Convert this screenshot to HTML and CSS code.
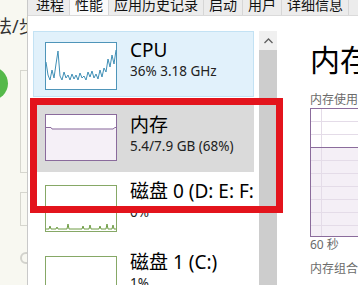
FILE: index.html
```html
<!DOCTYPE html>
<html lang="zh-CN">
<head>
<meta charset="utf-8">
<title>任务管理器</title>
<link rel="stylesheet" href="styles.css">
</head>
<body>
<div class="behind">
  <div class="behind-text">法/步</div>
  <div class="dot"></div>
  <div class="frame frame-a"></div>
  <div class="frame frame-b"></div>
  <div class="ring"></div>
</div>
<div class="tm">
  <div class="tabs">
    <div class="tab">进程</div>
    <div class="tab active">性能</div>
    <div class="tab">应用历史记录</div>
    <div class="tab">启动</div>
    <div class="tab">用户</div>
    <div class="tab">详细信息</div>
  </div>
  <div class="main">
    <div class="side">
      <div class="item sel">
        <svg class="spark" width="72" height="48" viewBox="0 0 72 48">
          <rect x="0.5" y="0.5" width="71" height="47" fill="#fff" stroke="#4f95b9"/>
          <polyline fill="none" stroke="#3f8fb6" stroke-width="1" points="1,20 3,33 5,38 7,28 9,36 11,22 13,9 15,34 17,38 19,30 21,36 23,33 25,38 27,32 29,37 31,33 33,38 35,31 37,36 39,34 41,38 43,30 45,35 47,29 49,36 51,32 53,37 55,28 57,35 59,26 61,30 63,17 65,25 67,13 69,22 71,8"/>
        </svg>
        <div class="txt">
          <div class="name">CPU</div>
          <div class="val">36% 3.18 GHz</div>
        </div>
      </div>
      <div class="item hot">
        <svg class="spark" width="72" height="47" viewBox="0 0 72 47">
          <rect x="0.5" y="0.5" width="71" height="46" fill="#fff"/>
          <rect x="0.5" y="14.5" width="71" height="32" fill="#f5f0f7"/>
          <polyline fill="none" stroke="#8a6b9c" stroke-width="1" points="1,13.5 6,13.5 7,15 68,15 70,13.5 71,13.5"/>
          <rect x="0.5" y="0.5" width="71" height="46" fill="none" stroke="#8a6b9c"/>
        </svg>
        <div class="txt">
          <div class="name">内存</div>
          <div class="val">5.4/7.9 GB (68%)</div>
        </div>
      </div>
      <div class="item disk">
        <svg class="spark" width="72" height="47" viewBox="0 0 72 47">
          <rect x="0.5" y="0.5" width="71" height="46" fill="#fff" stroke="#86a866"/>
          <polyline fill="none" stroke="#6e9c44" stroke-width="1" points="1,44 4,44 5,41 6,44 11,44 12,42 13,44 22,44 23,39 24,44 37,44 38,41 39,44 44,44 45,40 46,44 54,44 55,41 56,44 61,44 62,39 63,44 67,44 68,40 69,44 71,44"/>
        </svg>
        <div class="txt">
          <div class="name">磁盘 0 (D: E: F:</div>
          <div class="val">0%</div>
        </div>
      </div>
      <div class="item disk">
        <svg class="spark" width="72" height="47" viewBox="0 0 72 47">
          <rect x="0.5" y="0.5" width="71" height="46" fill="#fff" stroke="#86a866"/>
        </svg>
        <div class="txt">
          <div class="name">磁盘 1 (C:)</div>
          <div class="val">1%</div>
        </div>
      </div>
    </div>
    <div class="scroll">
      <div class="arrow">
        <svg width="9" height="6" viewBox="0 0 9 6"><polyline points="0.5,5 4.5,1 8.5,5" fill="none" stroke="#606060" stroke-width="1.3"/></svg>
      </div>
      <div class="thumb"></div>
    </div>
    <div class="detail">
      <div class="title">内存</div>
      <div class="label">内存使用</div>
      <svg class="chart" width="100" height="129" viewBox="0 0 100 129">
        <rect x="0" y="39" width="100" height="90" fill="#f4eff6"/>
        <g stroke="#e4dce8" stroke-width="1">
          <line x1="0" y1="13.5" x2="100" y2="13.5"/>
          <line x1="0" y1="26.5" x2="100" y2="26.5"/>
          <line x1="0" y1="52.5" x2="100" y2="52.5"/>
          <line x1="0" y1="65.5" x2="100" y2="65.5"/>
          <line x1="0" y1="78.5" x2="100" y2="78.5"/>
          <line x1="0" y1="91.5" x2="100" y2="91.5"/>
          <line x1="0" y1="104.5" x2="100" y2="104.5"/>
          <line x1="0" y1="117.5" x2="100" y2="117.5"/>
          <line x1="11.5" y1="0" x2="11.5" y2="129"/>
        </g>
        <line x1="0" y1="39.5" x2="100" y2="39.5" stroke="#8b6c9c"/>
        <rect x="0.5" y="0.5" width="99" height="128" fill="none" stroke="#8b6c9c"/>
      </svg>
      <div class="label">60 秒</div>
      <div class="label gap">内存组合</div>
    </div>
  </div>
</div>
<div class="mark"></div>
</body>
</html>
```
FILE: styles.css
```css
* { box-sizing: border-box; }
html, body { margin: 0; padding: 0; }
body {
  width: 358px;
  height: 285px;
  overflow: hidden;
  position: relative;
  display: flex;
  background: #f8f8f1;
  font-family: "Noto Sans", "Noto Sans CJK SC", sans-serif;
  color: #000;
}

/* window behind the task manager */
.behind {
  width: 27px;
  flex: none;
  position: relative;
  overflow: hidden;
}
.behind-text {
  margin: 14px 0 0 -6px;
  font-size: 18px;
  line-height: 24px;
  color: #333;
  white-space: nowrap;
}
.dot {
  position: absolute;
  left: -25px;
  top: 67px;
  width: 33px;
  height: 33px;
  border-radius: 50%;
  background: #55b94a;
}
.frame {
  position: absolute;
  left: 20px;
  width: 20px;
  border: 1px solid #d6d6ce;
}
.frame-a { top: 70px; height: 103px; }
.frame-b { top: 192px; height: 34px; }
.ring {
  position: absolute;
  left: 20px;
  top: 252px;
  width: 12px;
  height: 12px;
  border: 2px solid #d2d2cc;
  border-radius: 50%;
}

/* task manager */
.tm {
  flex: 1;
  min-width: 0;
  background: #fff;
  border-left: 1px solid #c9c9c9;
  display: flex;
  flex-direction: column;
}
.tabs {
  height: 16px;
  flex: none;
  display: flex;
  padding-left: 3px;
  background: #ececec;
  border-bottom: 1px solid #dadada;
  overflow: hidden;
}
.tab {
  margin-top: -2px;
  padding: 0 5px;
  font-size: 14px;
  line-height: 14px;
  border-right: 1px solid #d6d6d6;
  white-space: nowrap;
  color: #111;
}
.tab.active { background: #fafafa; }

.main {
  flex: 1;
  min-height: 0;
  display: flex;
}
.side {
  width: 226px;
  flex: none;
  padding: 15px 0 0 5px;
  display: flex;
  flex-direction: column;
}
.item {
  width: 221px;
  height: 71px;
  flex: none;
  display: flex;
  padding: 13px 0 0 12px;
}
.item.sel {
  height: 66px;
  padding: 10px 0 0 11px;
  margin-bottom: 3px;
  background: #e1f1fb;
  border: 1px solid #c3e2f4;
}
.item.hot {
  height: 72px;
  padding-top: 14px;
  background: #dadada;
}
.spark { flex: none; display: block; }
.txt {
  margin: -3px 0 0 13px;
  min-width: 0;
}
.item.hot .txt { margin-top: 0; }
.item.disk .txt { margin-top: -5px; }
.name {
  font-size: 19px;
  line-height: 22px;
  white-space: nowrap;
}
.val {
  font-size: 13.5px;
  line-height: 20px;
  white-space: nowrap;
  color: #222;
}

.scroll {
  width: 18px;
  flex: none;
  margin: 15px 0 0 5px;
  display: flex;
  flex-direction: column;
  background: #f0f0f0;
}
.arrow {
  height: 19px;
  display: flex;
  align-items: center;
  justify-content: center;
}
.arrow svg { display: block; }
.thumb {
  flex: 1;
  background: #cdcdcd;
}

.detail {
  flex: 1;
  min-width: 0;
  margin-left: 33px;
  padding-top: 24px;
  white-space: nowrap;
}
.title {
  font-size: 30px;
  line-height: 40px;
  margin-bottom: 12px;
}
.label {
  font-size: 12px;
  line-height: 16px;
  color: #6b6b6b;
}
.label.gap { margin-top: 8px; }
.chart { display: block; }

/* annotation */
.mark {
  position: absolute;
  left: 30px;
  top: 98px;
  width: 253px;
  height: 115px;
  border: 7px solid #e3141c;
}
```
